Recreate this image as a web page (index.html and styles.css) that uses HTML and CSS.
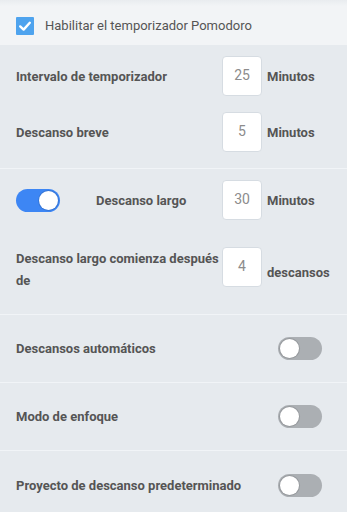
FILE: index.html
```html
<!DOCTYPE html>
<html lang="es">
<head>
<meta charset="utf-8">
<link rel="stylesheet" href="styles.css">
</head>
<body>
<div class="page">
  <header class="head">
    <span class="check">
      <svg viewBox="0 0 18 18" width="18" height="18"><path d="M4.2 9.4 L7.6 12.6 L13.8 5.8" fill="none" stroke="#fff" stroke-width="2.4" stroke-linecap="round" stroke-linejoin="round"/></svg>
    </span>
    <span class="head-text">Habilitar el temporizador Pomodoro</span>
  </header>

  <section class="group g1">
    <div class="row">
      <div class="label">Intervalo de temporizador</div>
      <div class="box">25</div>
      <div class="unit">Minutos</div>
    </div>
    <div class="row">
      <div class="label">Descanso breve</div>
      <div class="box">5</div>
      <div class="unit">Minutos</div>
    </div>
  </section>

  <section class="group g2">
    <div class="row">
      <div class="label with-toggle">
        <span class="toggle on"><span class="knob"></span></span>
        <span class="toggle-label">Descanso largo</span>
      </div>
      <div class="box">30</div>
      <div class="unit">Minutos</div>
    </div>
    <div class="row row-tall">
      <div class="label multi">Descanso largo comienza después de</div>
      <div class="box">4</div>
      <div class="unit">descansos</div>
    </div>
  </section>

  <section class="switch-row">
    <div class="label">Descansos automáticos</div>
    <span class="toggle"><span class="knob"></span></span>
  </section>
  <section class="switch-row">
    <div class="label">Modo de enfoque</div>
    <span class="toggle"><span class="knob"></span></span>
  </section>
  <section class="switch-row last">
    <div class="label">Proyecto de descanso predeterminado</div>
    <span class="toggle"><span class="knob"></span></span>
  </section>
</div>
</body>
</html>
```

FILE: styles.css
```css
* { box-sizing: border-box; }
html, body { margin: 0; padding: 0; }
body {
  background: #e6eaee;
  font-family: Roboto, "Noto Sans", "Liberation Sans", sans-serif;
  color: #555;
  width: 347px;
  height: 512px;
  overflow: hidden;
}
.page { display: flex; flex-direction: column; }

.head {
  height: 45px;
  background: linear-gradient(#e9ecef 0, #f2f4f6 6px, #f2f4f6 100%);
  display: flex;
  align-items: center;
  padding: 6px 16px 0;
  gap: 11px;
}
.check {
  width: 18px;
  height: 18px;
  background: #4ea3ee;
  border-radius: 1px;
  display: flex;
}
.head-text {
  font-size: 13px;
  color: #555;
}

.group {
  display: flex;
  flex-direction: column;
  padding: 11px 16px 16px;
  gap: 16px;
  border-bottom: 1.5px solid #f1f4f7;
}
.g2 { gap: 27px; padding-bottom: 22px; }

.row {
  display: grid;
  grid-template-columns: 206px 40px 1fr;
  align-items: center;
}
.row-tall { align-items: start; }

.label {
  font-size: 13px;
  font-weight: 700;
  color: #555;
}
.multi { line-height: 22px; margin-top: 1px; }
.with-toggle { display: flex; align-items: center; }
.toggle-label { margin-left: 36px; }

.box {
  height: 40px;
  background: #fff;
  border: 1px solid #d6dce2;
  border-radius: 4px;
  display: flex;
  align-items: center;
  justify-content: center;
  font-size: 14px;
  color: #8c8c8c;
  padding-bottom: 3px;
}
.unit {
  margin-left: 5px;
  font-size: 13px;
  font-weight: 700;
  color: #555;
}
.row-tall .unit { align-self: center; margin-top: 6px; }

.toggle {
  position: relative;
  display: inline-block;
  width: 44px;
  height: 23px;
  border-radius: 12px;
  background: #abafb3;
  flex: none;
}
.toggle .knob {
  position: absolute;
  top: 2px;
  left: 2px;
  width: 19px;
  height: 19px;
  border-radius: 50%;
  background: #fff;
  box-shadow: 0 0 0 1px rgba(0,0,0,0.12);
}
.toggle.on { background: #3d86f4; }
.toggle.on .knob { left: 23px; }

.switch-row {
  height: 68px;
  display: flex;
  align-items: center;
  justify-content: space-between;
  padding: 0 25px 0 16px;
  border-bottom: 1.5px solid #f1f4f7;
}
.switch-row.last { border-bottom: none; }
```
